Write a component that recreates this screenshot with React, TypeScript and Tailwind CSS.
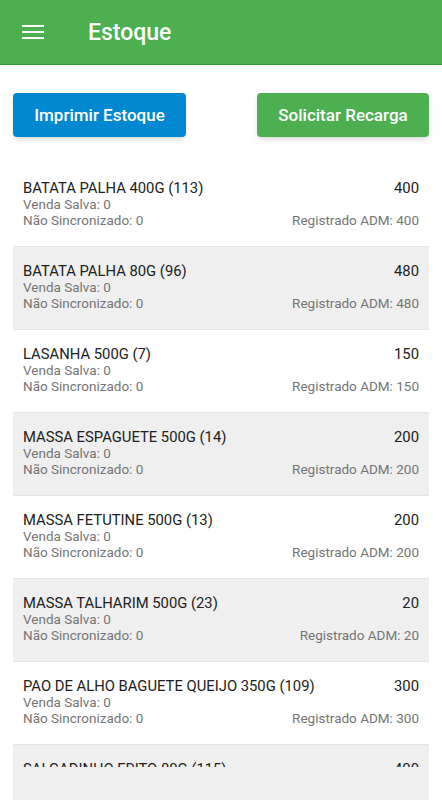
import React from "react";

const items = [
  { name: "BATATA PALHA 400G (113)", qty: 400 },
  { name: "BATATA PALHA 80G (96)", qty: 480 },
  { name: "LASANHA 500G (7)", qty: 150 },
  { name: "MASSA ESPAGUETE 500G (14)", qty: 200 },
  { name: "MASSA FETUTINE 500G (13)", qty: 200 },
  { name: "MASSA TALHARIM 500G (23)", qty: 20 },
  { name: "PAO DE ALHO BAGUETE QUEIJO 350G (109)", qty: 300 },
];

const App = () => {
  return (
    <div className="w-[442px] h-[800px] overflow-hidden bg-white font-['Roboto',sans-serif]">
      <header className="h-[65px] bg-[#4caf50] border-b border-[#2e9a34] flex items-center">
        <div className="ml-[22px] w-[22px] flex flex-col gap-[4px]">
          <span className="h-[2px] bg-white" />
          <span className="h-[2px] bg-white" />
          <span className="h-[2px] bg-white" />
        </div>
        <h1 className="ml-[44px] text-white text-[23px] font-medium leading-none">Estoque</h1>
      </header>

      <div className="flex justify-between px-[13px] mt-[28px]">
        <button className="w-[173px] h-[44px] rounded bg-[#0288d1] text-white text-[17px] font-medium shadow-md pt-[2px]">
          Imprimir Estoque
        </button>
        <button className="w-[172px] h-[44px] rounded bg-[#4caf50] text-white text-[17px] font-medium shadow-md pt-[2px]">
          Solicitar Recarga
        </button>
      </div>

      <div className="mx-[13px] mt-[27px]">
        {items.map((item, i) => (
          <div
            key={i}
            className={`px-[10px] pt-[16px] pb-[18px] border-b border-[#e4e4e4] ${i % 2 === 1 ? "bg-[#efefef]" : "bg-white"}`}
          >
            <div className="flex justify-between text-[14.8px] leading-4 text-[#212121]">
              <span>{item.name}</span>
              <span>{item.qty}</span>
            </div>
            <div className="text-[13.5px] leading-4 text-[#757575]">Venda Salva: 0</div>
            <div className="flex justify-between text-[13.5px] leading-4 text-[#757575]">
              <span>Não Sincronizado: 0</span>
              <span>Registrado ADM: {item.qty}</span>
            </div>
          </div>
        ))}
        <div className="h-[60px] bg-[#efefef] px-[10px] pt-[16px]">
          <div className="h-[6px] overflow-hidden">
            <div className="flex justify-between text-[14.8px] leading-4 text-[#212121]">
              <span>SALGADINHO FRITO 80G (115)</span>
              <span>400</span>
            </div>
          </div>
        </div>
      </div>
    </div>
  );
};

export default App;
